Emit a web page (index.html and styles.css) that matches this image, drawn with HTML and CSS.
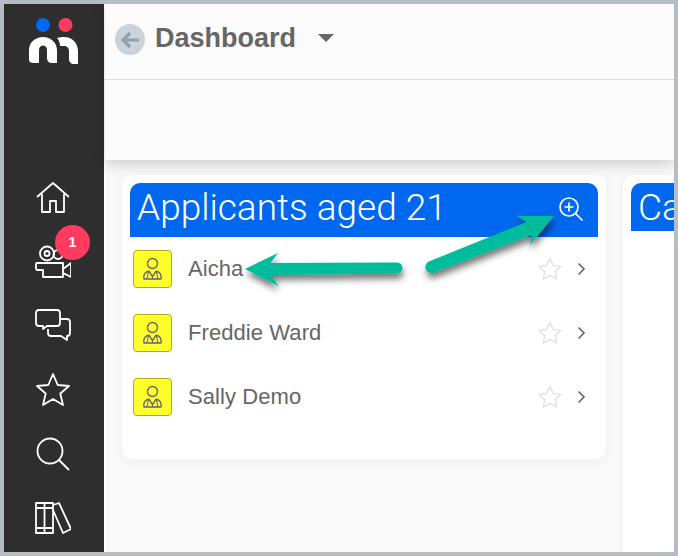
FILE: index.html
```html
<!DOCTYPE html>
<html lang="en">
<head>
<meta charset="utf-8">
<title>Dashboard</title>
<link rel="stylesheet" href="styles.css">
</head>
<body>
<svg class="defs" width="0" height="0" aria-hidden="true">
  <symbol id="person" viewBox="0 0 37 36">
    <circle cx="18.500" cy="12.500" r="5" fill="none" stroke="#666" stroke-width="1.400"/>
    <path d="M10 28c-1.300-4 1.500-7.500 5-7.800l3.500 5.500 3.500-5.500c3.500.3 6.300 3.800 5 7.800z" fill="none" stroke="#666" stroke-width="1.400" stroke-linejoin="round"/>
    <path d="M14.500 21l-1.500 7M22.500 21l1.500 7M18.500 24v4" fill="none" stroke="#666" stroke-width="1.100"/>
  </symbol>
  <symbol id="star" viewBox="0 0 24 24">
    <path d="M12 1.500l3.300 7 7.700.9-5.700 5.200 1.500 7.600L12 18.400l-6.800 3.800 1.500-7.600L1 9.400l7.700-.9z" fill="none" stroke-linejoin="round"/>
  </symbol>
</svg>
<div class="frame">
  <nav class="sidebar">
    <div class="logo">
      <svg width="50" height="50" viewBox="0 0 50 50">
        <circle cx="14" cy="7" r="7" fill="#0068ee"/>
        <circle cx="36.500" cy="7" r="7" fill="#ff3b5f"/>
        <path fill="#fff" d="M0 42V32C0 24 7 19 14 19c8 0 14 6 14 13v13h-5c-3 0-5-2-5-5v-8c0-3-2-4.500-4-4.500s-4 1.500-4 4.500v13H4c-2 0-4-1-4-3z"/>
        <path fill="#fff" d="M28 20c3-1 5-1 7-1 8 0 14 6 14 14v13h-4c-3 0-5-2-5-5v-8c0-3-2-5-5-5h-4c0-3-1-6-3-8z"/>
      </svg>
    </div>
    <a class="nav-item">
      <svg width="36" height="36" viewBox="0 0 36 36"><path d="M2 17L18 3l16 14M7 14v18h8V21h6v11h8V14"/></svg>
    </a>
    <a class="nav-item">
      <svg width="36" height="36" viewBox="0 0 36 36"><circle cx="12" cy="9.500" r="7"/><circle cx="12" cy="9.500" r="2.500"/><circle cx="23" cy="10.500" r="4.500"/><path d="M2 19h26v14H8v-7H2.500Q1 26 1 24v-4q0-1 1-1zM28 25l8-6v14l-8-4"/></svg>
      <span class="badge">1</span>
    </a>
    <a class="nav-item">
      <svg width="36" height="36" viewBox="0 0 36 36"><path d="M4 2h18c2 0 3 1 3 3v10c0 2-1 3-3 3H12v0l-4 3v-3H4c-2 0-3-1-3-3V5c0-2 1-3 3-3z"/><path d="M25 11h7c2 0 3 1 3 3v11c0 2-1 3-3 3v4l-6-4H16c-2 0-3-1-3-3v-4"/></svg>
    </a>
    <a class="nav-item">
      <svg width="36" height="36" viewBox="0 0 36 36"><path d="M18 2l4.700 11 11.300 1-8.700 7.500 2.700 11.500-10-6-10 6 2.700-11.500L2 14l11.300-1z"/></svg>
    </a>
    <a class="nav-item">
      <svg width="36" height="36" viewBox="0 0 36 36"><circle cx="15" cy="15" r="12.500"/><path d="M24 24l10 10"/></svg>
    </a>
    <a class="nav-item">
      <svg width="36" height="36" viewBox="0 0 36 36"><path d="M1 3h17v30H1zM9.500 3v30M1 8h17M1 28h17M18 5l6-2 12 26-8 4-10-23"/></svg>
    </a>
  </nav>
  <main class="main">
    <header class="topbar">
      <div class="title-row">
        <span class="back">
          <svg width="20" height="18" viewBox="0 0 20 18"><path d="M19 9H3M10 2L3 9l7 7" fill="none" stroke="#8ea1ad" stroke-width="3.200"/></svg>
        </span>
        <h1 class="page-title">Dashboard</h1>
        <span class="caret"></span>
      </div>
    </header>
    <section class="board">
      <article class="card">
        <div class="card-head">
          <h2 class="card-title">Applicants aged 21</h2>
          <svg class="zoom-icon" width="26" height="26" viewBox="0 0 26 26"><circle cx="11" cy="11" r="9"/><path d="M11 6.500v9M6.500 11h9M17.500 17.500l7 7"/></svg>
        </div>
        <ul class="rows">
          <li class="row">
            <span class="avatar"><svg class="person" width="37" height="36"><use href="#person"/></svg></span>
            <span class="name">Aicha</span>
            <svg class="fav" width="24" height="24"><use href="#star"/></svg>
            <svg class="chev" width="9" height="14" viewBox="0 0 9 14"><path d="M1.500 1.500L7 7l-5.500 5.500"/></svg>
          </li>
          <li class="row">
            <span class="avatar"><svg class="person" width="37" height="36"><use href="#person"/></svg></span>
            <span class="name">Freddie Ward</span>
            <svg class="fav" width="24" height="24"><use href="#star"/></svg>
            <svg class="chev" width="9" height="14" viewBox="0 0 9 14"><path d="M1.500 1.500L7 7l-5.500 5.500"/></svg>
          </li>
          <li class="row">
            <span class="avatar"><svg class="person" width="37" height="36"><use href="#person"/></svg></span>
            <span class="name">Sally Demo</span>
            <svg class="fav" width="24" height="24"><use href="#star"/></svg>
            <svg class="chev" width="9" height="14" viewBox="0 0 9 14"><path d="M1.500 1.500L7 7l-5.500 5.500"/></svg>
          </li>
        </ul>
      </article>
      <article class="card card-next">
        <div class="card-head card-head-short">
          <h2 class="card-title">Ca</h2>
        </div>
      </article>
    </section>
  </main>
  <svg class="annotations" width="678" height="556" viewBox="0 0 678 556" aria-hidden="true">
    <defs>
      <filter id="arrow-shadow" x="-20%" y="-40%" width="140%" height="180%">
        <feDropShadow dx="1" dy="5" stdDeviation="3.500" flood-color="#000" flood-opacity=".55"/>
      </filter>
    </defs>
    <path class="arrow" d="M245 269l33-16-7.500 10L397 262.500a5.500 5.500 0 0 1 0 11L271 275l7.500 11z"/>
    <path class="arrow" d="M554 216l-37 0 9.500 6-97.500 39.500a6 6 0 0 0 5 11L532 235l-2 10z"/>
  </svg>
</div>
</body>
</html>
```

FILE: styles.css
```css
* { box-sizing: border-box; }
html, body { margin: 0; padding: 0; height: 100%; }
body { font-family: "Liberation Sans", Arial, sans-serif; overflow: hidden; background: #fff; }
.defs { position: absolute; }

.frame {
  position: relative;
  display: flex;
  width: 678px;
  height: 556px;
  border: 4px solid #b5bcc3;
  overflow: hidden;
}

.sidebar {
  flex: 0 0 100px;
  display: flex;
  flex-direction: column;
  align-items: center;
  background: #2e2e2e;
}
.logo { height: 162px; padding: 14px 0 0 0; }
.logo svg { display: block; }
.nav-item {
  position: relative;
  flex: 0 0 64px;
  width: 100%;
  display: flex;
  align-items: center;
  justify-content: center;
  margin-left: -2px;
}
.nav-item svg { fill: none; stroke: #fff; stroke-width: 1.800; stroke-linejoin: round; }
.badge {
  position: absolute;
  left: 52px;
  top: -5px;
  width: 35px;
  height: 35px;
  border-radius: 50%;
  background: #ff3b5f;
  color: #fff;
  font-size: 14px;
  font-weight: 700;
  line-height: 35px;
  text-align: center;
}

.main {
  flex: 1;
  min-width: 0;
  display: flex;
  flex-direction: column;
  margin-left: 1px;
  background: #f9f9fa;
}
.topbar {
  flex: 0 0 156px;
  background: #fbfbfb;
  box-shadow: 0 4px 14px rgba(0, 0, 0, .18);
  position: relative;
}
.title-row {
  height: 76px;
  display: flex;
  align-items: center;
  padding: 0 0 8px 10px;
  border-bottom: 1px solid #dcdcdc;
}
.back {
  width: 30px;
  height: 31px;
  border-radius: 50%;
  background: #cbd3d9;
  display: flex;
  align-items: center;
  justify-content: center;
  margin-top: 4px;
}
.page-title {
  margin: 2px 0 0 10px;
  font-size: 27px;
  font-weight: 700;
  color: #666;
}
.caret {
  margin: 0 0 0 22px;
  width: 0;
  height: 0;
  border-left: 8px solid transparent;
  border-right: 8px solid transparent;
  border-top: 8px solid #666;
}

.board {
  flex: 1;
  display: flex;
  gap: 17px;
  padding: 15px 0 0 17px;
  overflow: hidden;
  align-items: flex-start;
}
.card {
  flex: 0 0 484px;
  background: #fff;
  border-radius: 10px;
  padding: 8px 8px 30px;
  box-shadow: 0 2px 8px rgba(120, 120, 160, .08);
}
.card-next { flex-basis: 300px; height: 400px; padding-bottom: 0; }
.card-head {
  height: 54px;
  display: flex;
  align-items: flex-start;
  justify-content: space-between;
  padding: 0 14px 0 7px;
  background: #0068ee;
  border-radius: 10px 10px 0 0;
}
.card-head-short { height: 48px; overflow: hidden; }
.card-title {
  margin: 0;
  font-family: Roboto, "Liberation Sans", sans-serif;
  font-size: 37px;
  font-weight: 300;
  line-height: 50px;
  color: #fff;
  white-space: nowrap;
}
.zoom-icon { fill: none; stroke: #fff; stroke-width: 1.700; margin-top: 13px; }

.rows { list-style: none; margin: 0; padding: 0; }
.row {
  height: 64px;
  display: flex;
  align-items: center;
  padding: 0 12px 0 3px;
}
.avatar {
  flex: 0 0 39px;
  height: 38px;
  background: #ffff2e;
  border: 1px solid #b5ac1a;
  border-radius: 4px;
  display: flex;
  align-items: center;
  justify-content: center;
}
.person { flex: none; }
.name {
  flex: 1;
  margin-left: 16px;
  font-size: 22px;
  letter-spacing: .08px;
  color: #666;
}
.fav { fill: none; stroke: #e2e2e2; stroke-width: 1.500; margin-right: 15px; }
.chev { fill: none; stroke: #666; stroke-width: 1.600; }

.annotations { position: absolute; left: -4px; top: -4px; pointer-events: none; }
.arrow { fill: #00bb9c; filter: url(#arrow-shadow); }
```
